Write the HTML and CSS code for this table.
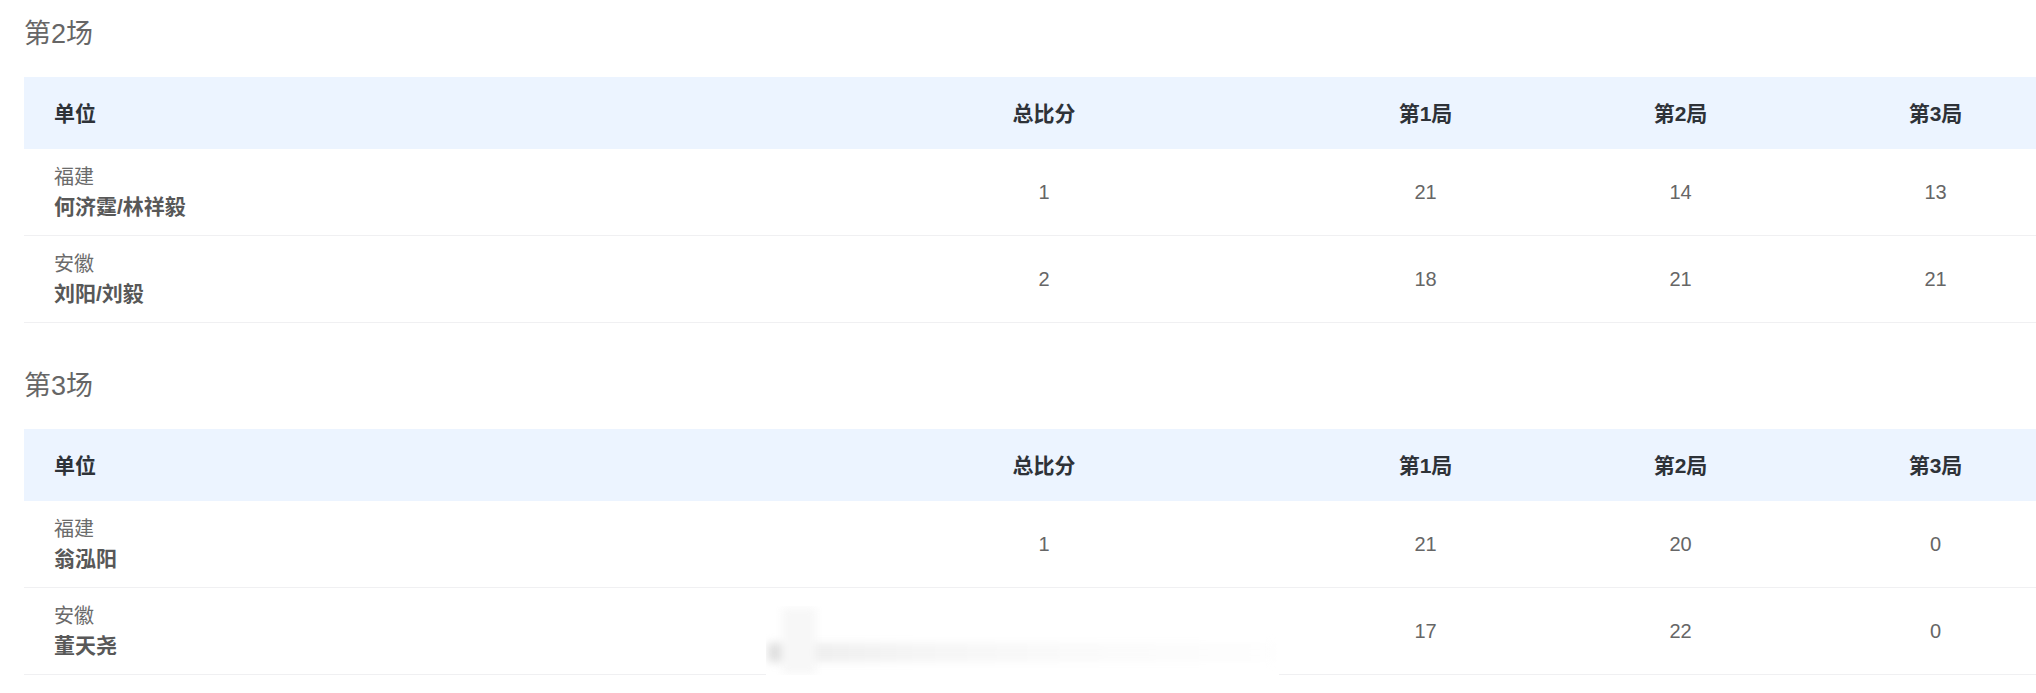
FILE: index.html
```html
<!DOCTYPE html>
<html lang="zh-CN">
<head>
<meta charset="utf-8">
<title>比赛成绩</title>
<link rel="stylesheet" href="styles.css">
</head>
<body>
<div class="page">
  <section class="match">
    <h2 class="match-title">第2场</h2>
    <div class="score-table">
      <div class="row head">
        <div class="cell unit">单位</div>
        <div class="cell">总比分</div>
        <div class="cell">第1局</div>
        <div class="cell">第2局</div>
        <div class="cell">第3局</div>
      </div>
      <div class="row">
        <div class="cell unit"><span class="prov">福建</span><span class="name">何济霆/林祥毅</span></div>
        <div class="cell num">1</div>
        <div class="cell num">21</div>
        <div class="cell num">14</div>
        <div class="cell num">13</div>
      </div>
      <div class="row">
        <div class="cell unit"><span class="prov">安徽</span><span class="name">刘阳/刘毅</span></div>
        <div class="cell num">2</div>
        <div class="cell num">18</div>
        <div class="cell num">21</div>
        <div class="cell num">21</div>
      </div>
    </div>
  </section>
  <section class="match">
    <h2 class="match-title">第3场</h2>
    <div class="score-table">
      <div class="row head">
        <div class="cell unit">单位</div>
        <div class="cell">总比分</div>
        <div class="cell">第1局</div>
        <div class="cell">第2局</div>
        <div class="cell">第3局</div>
      </div>
      <div class="row">
        <div class="cell unit"><span class="prov">福建</span><span class="name">翁泓阳</span></div>
        <div class="cell num">1</div>
        <div class="cell num">21</div>
        <div class="cell num">20</div>
        <div class="cell num">0</div>
      </div>
      <div class="row">
        <div class="cell unit"><span class="prov">安徽</span><span class="name">董天尧</span></div>
        <div class="cell num"></div>
        <div class="cell num">17</div>
        <div class="cell num">22</div>
        <div class="cell num">0</div>
        <div class="smudge"><span class="smear"></span><span class="smear-v"></span></div>
      </div>
    </div>
  </section>
</div>
</body>
</html>
```

FILE: styles.css
```css
html, body {
  margin: 0;
  padding: 0;
  background: #ffffff;
  overflow: hidden;
}

body {
  font-family: "Liberation Sans", "Noto Sans CJK SC", sans-serif;
  color: #666666;
}

.page {
  padding: 13px 0 0 24px;
  display: flex;
  flex-direction: column;
  gap: 42px;
  width: 2039px;
}

.match {
  display: flex;
  flex-direction: column;
  gap: 24px;
}

.match-title {
  margin: 0;
  font-size: 27px;
  line-height: 42px;
  height: 40px;
  font-weight: normal;
  color: #666666;
}

.score-table {
  display: flex;
  flex-direction: column;
}

.row {
  position: relative;
  display: grid;
  grid-template-columns: 766px 508px 255px 255px 255px;
  height: 86px;
  border-bottom: 1px solid #f0f0f2;
}

.row.head {
  height: 72px;
  border-bottom: none;
  background: #ecf4ff;
  font-weight: bold;
  font-size: 21px;
  color: #2e3238;
}

.row.head .cell {
  padding-bottom: 2px;
}

.cell {
  display: flex;
  align-items: center;
  justify-content: center;
}

.cell.unit {
  justify-content: center;
  align-items: flex-start;
  flex-direction: column;
  padding-left: 30px;
}

.prov {
  font-size: 20px;
  line-height: 30px;
  color: #6b6b6b;
}

.name {
  font-size: 21px;
  line-height: 30px;
  font-weight: bold;
  color: #585858;
}

.num {
  font-size: 20px;
  color: #666666;
}

.smudge {
  position: absolute;
  left: 742px;
  top: 18px;
  width: 513px;
  height: 70px;
  background: #ffffff;
  overflow: hidden;
}

.smear {
  position: absolute;
  left: 2px;
  top: 37px;
  width: 508px;
  height: 19px;
  background: linear-gradient(to right, #dddddd 0%, #eeeeee 8%, #f5f5f5 30%, #fafafa 60%, #fefefe 100%);
  filter: blur(4px);
}

.smear-v {
  position: absolute;
  left: 16px;
  top: 2px;
  width: 34px;
  height: 66px;
  background: #f7f7f7;
  filter: blur(4px);
}
```
